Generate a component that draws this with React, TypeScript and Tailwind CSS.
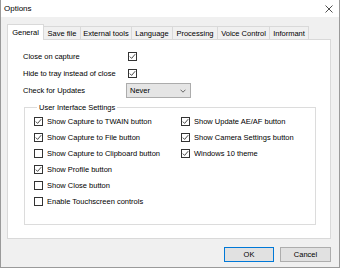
const tabs = [
  { label: "General", w: "w-[37px]" },
  { label: "Save file", w: "w-[38px]" },
  { label: "External tools", w: "w-[52px]" },
  { label: "Language", w: "w-[42px]" },
  { label: "Processing", w: "w-[46px]" },
  { label: "Voice Control", w: "w-[53px]" },
  { label: "Informant", w: "w-[40px]" },
];

const leftOptions = [
  { label: "Show Capture to TWAIN button", checked: true },
  { label: "Show Capture to File button", checked: true },
  { label: "Show Capture to Clipboard button", checked: false },
  { label: "Show Profile button", checked: true },
  { label: "Show Close button", checked: false },
  { label: "Enable Touchscreen controls", checked: false },
];

const rightOptions = [
  { label: "Show Update AE/AF button", checked: true },
  { label: "Show Camera Settings button", checked: true },
  { label: "Windows 10 theme", checked: true },
];

const Checkbox = ({ checked }: { checked: boolean }) => (
  <span className="flex h-[9px] w-[9px] shrink-0 items-center justify-center border border-[#333333] bg-white">
    {checked && (
      <svg className="h-[7px] w-[7px]" viewBox="0 0 7 7" fill="none">
        <path d="M0.8 3.6 2.6 5.4 6.2 1.2" stroke="#333333" strokeWidth={0.9} />
      </svg>
    )}
  </span>
);

const CheckRow = ({ label, checked }: { label: string; checked: boolean }) => (
  <div className="flex h-[16px] items-center gap-[4px]">
    <Checkbox checked={checked} />
    <span>{label}</span>
  </div>
);

export default function App() {
  return (
    <div
      className="flex h-[268px] w-[340px] flex-col border-x border-b border-[#9a9a9a] bg-[#f0f0f0] text-[7.5px] leading-[9px] text-black"
      style={{ fontFamily: '"Liberation Sans", Arial, sans-serif' }}
    >
      <div className="flex h-[17px] items-center justify-between bg-white pl-[3px] pr-[6px]">
        <span className="text-[8px]">Options</span>
        <svg className="h-[8px] w-[8px]" viewBox="0 0 8 8" fill="none">
          <path d="M0.5 0.5 7.5 7.5M7.5 0.5 0.5 7.5" stroke="#222" strokeWidth={0.8} />
        </svg>
      </div>

      <div className="flex h-[22px] items-end pl-[6px] pt-[6px]">
        {tabs.map((tab, i) =>
          i === 0 ? (
            <div
              key={tab.label}
              className={`relative z-10 -mb-px flex h-[16px] items-start justify-center border border-b-0 border-[#d9d9d9] bg-white pt-[3px] ${tab.w}`}
            >
              {tab.label}
            </div>
          ) : (
            <div
              key={tab.label}
              className={`-ml-px flex h-[13px] items-center justify-center border border-b-0 border-[#d9d9d9] bg-[#f0f0f0] ${tab.w}`}
            >
              {tab.label}
            </div>
          )
        )}
      </div>

      <div className="ml-[6px] h-[200px] w-[324px] border border-[#d9d9d9] bg-white pl-[15px] pt-[8px]">
        <div className="flex h-[17px] items-center">
          <span className="w-[105px]">Close on capture</span>
          <Checkbox checked />
        </div>
        <div className="flex h-[17px] items-center">
          <span className="w-[105px]">Hide to tray instead of close</span>
          <Checkbox checked />
        </div>
        <div className="flex h-[17px] items-center">
          <span className="w-[103px]">Check for Updates</span>
          <div className="flex h-[15px] w-[65px] items-center justify-between border border-[#acacac] bg-[#e5e5e5] pl-[3px] pr-[4px]">
            <span>Never</span>
            <svg className="h-[4px] w-[6px]" viewBox="0 0 6 4" fill="none">
              <path d="M0.5 0.7 3 3.2 5.5 0.7" stroke="#444" strokeWidth={0.8} />
            </svg>
          </div>
        </div>

        <fieldset className="ml-[1px] mt-[4px] h-[122px] w-[292px] border border-[#dcdcdc] pb-[15px] pl-[9px]">
          <legend className="ml-[3px] px-[2px] leading-[9px]">User Interface Settings</legend>
          <div className="flex pt-[1px]">
            <div className="flex w-[147px] flex-col">
              {leftOptions.map((o) => (
                <CheckRow key={o.label} label={o.label} checked={o.checked} />
              ))}
            </div>
            <div className="flex flex-col">
              {rightOptions.map((o) => (
                <CheckRow key={o.label} label={o.label} checked={o.checked} />
              ))}
            </div>
          </div>
        </fieldset>
      </div>

      <div className="flex justify-end gap-[6px] pr-[8px] pt-[8px]">
        <button className="flex h-[15px] w-[50px] items-center justify-center border border-[#0078d7] bg-[#e1e1e1]">
          OK
        </button>
        <button className="flex h-[15px] w-[51px] items-center justify-center border border-[#adadad] bg-[#e1e1e1]">
          Cancel
        </button>
      </div>
    </div>
  );
}
